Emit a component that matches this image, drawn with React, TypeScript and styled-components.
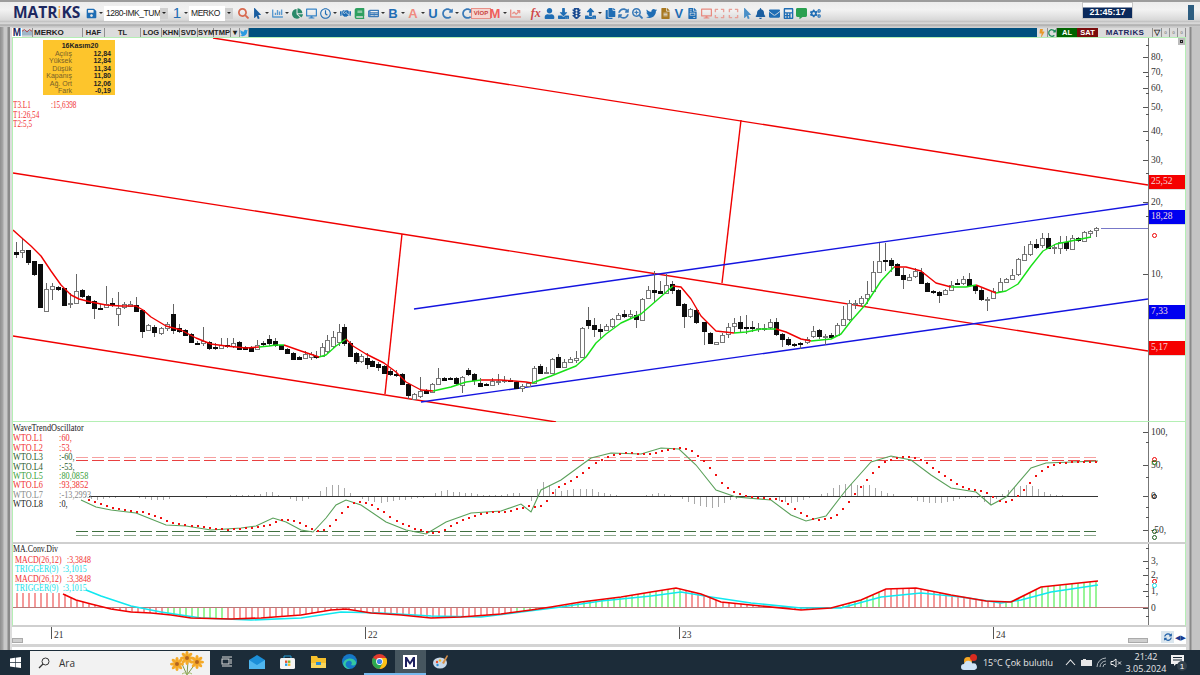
import React from 'react';
import styled, { createGlobalStyle } from 'styled-components';
import {
  FaSave, FaSearch, FaMousePointer, FaChartBar, FaChartPie, FaDesktop, FaRegClock, FaHandshake,
  FaNewspaper, FaUser, FaDownload, FaTrafficLight, FaUpload, FaCopy, FaSyncAlt, FaSearchPlus,
  FaTwitter, FaFileAlt, FaExpand, FaBell, FaEnvelope, FaCalculator, FaCommentAlt, FaCogs, FaBolt,
  FaRedoAlt, FaChartLine, FaBook, FaFileInvoice,
} from 'react-icons/fa';

const GlobalStyle = createGlobalStyle`
  html, body { margin: 0; padding: 0; background: #b4b4b4; }
  #root { width: 1200px; height: 675px; overflow: hidden; }
`;

/* ---- chart data, all in page pixels ---- */
type Candle = [number, number, number, number, number];
type Pt = [number, number];

const seg1: Candle[] = [
  [251,253,241,257,1],[249,251,237,257,0],[249,261,249,264,1],[260,273,260,275,1],[263,306,263,307,1],
  [288,310,282,310,0],[285,288,282,299,0],[286,288,285,290,1],[287,304,287,305,1],[302,303,292,307,0],
  [290,302,273,302,0],[289,295,288,297,1],[295,302,294,303,1],[300,307,299,318,1],[307,308,303,309,1],
  [303,306,285,307,0],[302,304,297,306,1],[307,313,291,325,0],[303,306,301,308,0],[303,305,300,306,0],
  [304,310,296,310,1],[309,330,309,337,1],[324,329,323,330,0],[326,331,324,336,1],[327,332,326,334,0],
  [323,327,321,330,0],[313,329,303,333,1],[327,330,323,332,1],[329,334,328,335,1],[333,341,332,342,1],
  [342,343,340,344,1],[340,342,326,345,0],[341,347,340,349,1],[346,347,342,349,1],[344,347,337,348,0],
  [344,345,337,347,1],[342,345,337,347,0],[341,348,340,349,1],[346,348,345,349,1],[347,350,345,351,1],
  [344,348,339,349,0],[342,343,340,346,1],[338,342,334,345,1],[340,344,337,346,1],[344,348,344,349,1],
  [348,352,347,353,1],[352,358,351,359,1],[356,358,355,359,1],
];
const seg2: Candle[] = [
  [353,357,350,358,0],[353,356,351,359,0],[355,356,350,358,1],[346,355,342,356,0],[339,350,334,352,0],
  [336,345,330,347,0],[331,341,323,345,0],[326,342,323,345,1],[342,355,340,356,1],[352,360,351,363,1],
  [355,360,353,362,0],[357,363,352,368,1],[360,365,359,366,1],[363,366,361,370,1],
];
const seg3: Candle[] = [
  [365,372,364,373,1],[370,373,368,375,1],[373,374,369,376,1],[373,383,372,384,1],[383,394,382,398,1],
  [393,398,392,399,0],[390,395,376,397,0],[389,392,388,393,1],[383,391,382,392,0],[377,383,367,384,0],
  [377,379,376,380,1],[377,378,376,379,1],[377,382,376,384,1],[376,384,375,392,0],[369,373,367,375,1],
  [373,379,372,384,1],[382,385,377,385,1],[383,384,382,385,1],[380,384,377,385,0],[380,381,373,384,0],
  [379,380,375,382,0],[379,380,377,381,1],[381,387,380,388,1],[385,387,383,391,0],[382,385,381,386,0],
  [367,382,365,383,0],[365,372,363,373,1],[371,372,366,373,0],[358,372,357,372,0],[356,366,353,367,1],
  [361,366,358,367,0],[358,361,356,362,0],[357,359,350,362,0],[327,356,326,357,0],[319,324,306,328,1],
  [324,328,317,336,1],[328,330,323,337,1],[325,329,323,330,0],[318,325,317,327,0],[314,318,312,319,0],
  [313,315,309,317,1],[313,315,309,317,0],[314,318,310,327,1],[298,319,297,320,0],[289,297,285,298,0],
  [289,291,270,302,1],[290,292,280,293,1],[284,292,273,293,0],[283,289,280,293,1],[289,304,288,305,1],
  [303,315,302,327,1],[308,315,307,317,0],[309,321,308,323,1],
];
const seg4: Candle[] = [
  [321,330,321,344,1],[332,342,331,343,1],[341,343,341,344,0],[334,341,332,342,0],[326,333,322,337,0],
  [322,325,317,332,0],[321,327,315,332,1],[326,327,314,333,1],[326,327,320,331,1],[327,328,322,331,0],
  [327,328,323,330,0],[321,326,318,328,0],[321,333,317,335,1],[333,338,332,346,1],[338,343,336,345,1],
  [343,344,342,346,1],[342,343,341,348,1],[338,341,336,343,0],[330,335,325,337,0],[329,335,328,338,1],
  [335,336,333,344,0],[334,336,332,337,1],[324,334,322,335,0],[318,324,305,325,0],[302,318,299,320,0],
  [302,303,299,308,0],[297,302,295,305,0],[293,297,280,303,0],[271,290,260,292,0],[260,271,242,272,0],
  [259,260,242,270,1],[259,264,257,271,1],[263,274,262,275,1],[274,278,267,288,1],[276,279,273,280,0],
  [270,275,267,277,0],[271,282,267,283,1],[282,290,281,291,1],[290,291,289,293,1],[291,294,290,302,1],
  [289,293,288,293,0],[284,289,280,290,0],[282,283,278,284,1],[278,282,275,284,0],[278,284,272,285,1],
  [285,289,284,293,1],[289,298,287,300,1],[298,299,296,310,0],[290,297,287,297,0],[281,290,277,290,0],
  [278,281,277,282,0],[274,278,268,279,0],[258,273,257,275,0],[253,259,245,260,0],[243,253,240,255,0],
  [243,246,238,248,1],[237,244,232,247,0],[237,247,232,248,1],[246,247,243,253,0],[241,247,235,253,0],
  [241,247,235,250,1],[237,248,234,249,0],[237,239,236,241,1],[231,240,230,241,0],[230,232,229,237,0],
  [227,229,226,236,0],
];

const spread = (rows: Candle[], x0: number, x1: number) =>
  rows.map((c, i) => ({ x: Math.round(x0 + ((x1 - x0) * i) / (rows.length - 1)), c }));

const candles = [
  ...spread(seg1, 15, 298),
  ...spread(seg2, 304, 377),
  ...spread(seg3, 383, 695),
  ...spread(seg4, 703, 1095),
];

const maRuns: { color: string; pts: Pt[] }[] = [
  { color: '#f00000', pts: [[12,229],[22,238],[30,245],[40,255],[50,270],[60,284],[70,294],[78,298],[90,301],[105,304],[120,305],[135,305],[142,309],[150,316],[165,325],[180,329],[195,337],[210,343],[225,345],[245,347],[258,346]] },
  { color: '#18e018', pts: [[258,346],[268,345],[275,344],[283,344]] },
  { color: '#f00000', pts: [[283,344],[300,350],[318,356]] },
  { color: '#18e018', pts: [[318,356],[325,354],[335,345],[345,338]] },
  { color: '#f00000', pts: [[345,338],[352,345],[365,353],[383,362],[395,371],[405,381],[420,389],[432,390]] },
  { color: '#18e018', pts: [[432,390],[450,386],[465,381],[480,379]] },
  { color: '#f00000', pts: [[480,379],[500,379],[525,381],[531,382]] },
  { color: '#18e018', pts: [[531,382],[550,375],[575,365],[585,356],[595,342],[605,333],[620,322],[640,313],[655,300],[672,285]] },
  { color: '#f00000', pts: [[672,285],[680,286],[690,298],[700,315],[715,330],[733,332]] },
  { color: '#18e018', pts: [[733,332],[745,331],[760,328],[775,328]] },
  { color: '#f00000', pts: [[775,328],[785,331],[800,338],[810,340]] },
  { color: '#18e018', pts: [[810,340],[830,338],[840,333],[850,320],[865,303],[880,280],[893,266]] },
  { color: '#f00000', pts: [[893,266],[905,266],[920,270],[935,282],[950,286]] },
  { color: '#18e018', pts: [[950,286],[965,286],[975,284]] },
  { color: '#f00000', pts: [[975,284],[985,288],[995,292]] },
  { color: '#18e018', pts: [[995,292],[1005,290],[1017,283],[1030,265],[1042,250],[1055,243],[1075,239],[1090,236]] },
];

const trendLines: { color: string; d: number[] }[] = [
  { color: '#f00000', d: [212,37,1147,184] },
  { color: '#f00000', d: [12,172,1147,350] },
  { color: '#f00000', d: [12,335,555,421] },
  { color: '#f00000', d: [401,233,384,393] },
  { color: '#f00000', d: [740,119,721,282] },
  { color: '#1414e0', d: [413,308,1147,203] },
  { color: '#1414e0', d: [420,401,1147,298] },
];

const wtoLine: Pt[] = [[80,500],[95,507],[110,510],[135,513],[150,519],[165,525],[185,526],[210,530],[240,528],[255,526],[272,518],[285,522],[300,530],[312,532],[325,518],[335,505],[345,500],[360,505],[385,522],[405,530],[425,534],[445,522],[470,513],[500,511],[520,504],[530,512],[540,490],[560,480],[590,458],[610,453],[640,454],[660,448],[678,449],[695,465],[715,490],[735,497],[770,500],[790,515],[805,521],[825,516],[845,490],[870,462],[890,456],[910,460],[930,475],[950,488],[975,492],[990,505],[1005,497],[1030,468],[1045,463],[1097,461]];
const macdLine: Pt[] = [[62,594],[75,600],[90,604],[110,609],[130,612],[150,613],[170,615],[190,618],[230,619],[260,618],[300,615],[330,610],[345,609],[370,613],[400,615],[430,618],[460,617],[500,614],[530,610],[550,607],[580,602],[620,597],[650,592],[675,588],[700,594],[720,602],[760,606],[800,610],[830,608],[860,600],[885,589],[915,588],[950,595],[985,601],[1010,602],[1040,587],[1097,581]];
const triggerLine: Pt[] = [[85,590],[100,596],[130,606],[160,612],[200,618],[250,620],[300,618],[340,612],[380,613],[430,616],[480,617],[520,612],[560,607],[600,601],[650,596],[680,592],[710,597],[750,603],[800,608],[840,608],[880,597],[920,593],[960,597],[1000,603],[1020,600],[1050,592],[1097,585]];
const greenBars: Pt[] = [[165,225],[510,680],[815,880],[1000,1098]];

const valueAt = (pts: Pt[], x: number) => {
  if (x <= pts[0][0]) return pts[0][1];
  for (let i = 1; i < pts.length; i++) {
    if (x <= pts[i][0]) {
      const [x0, y0] = pts[i - 1];
      const [x1, y1] = pts[i];
      return y0 + ((y1 - y0) * (x - x0)) / (x1 - x0);
    }
  }
  return pts[pts.length - 1][1];
};

const lagged = (x: number) => (valueAt(wtoLine, x - 6) + valueAt(wtoLine, x - 12) + valueAt(wtoLine, x - 18)) / 3;
const steps = (from: number, to: number) => {
  const out: number[] = [];
  for (let x = from; x <= to; x += 6.03) out.push(Math.round(x));
  return out;
};
const toPoints = (pts: Pt[]) => pts.map((p) => p.join(',')).join(' ');

/* ---- page frame ---- */
const Page = styled.div`
  width: 1200px;
  height: 675px;
  display: flex;
  flex-direction: column;
  font-family: 'Liberation Sans', Arial, sans-serif;
`;

const TopBar = styled.header`
  height: 27px;
  flex: none;
  box-sizing: border-box;
  border-top: 2px solid #9c9c9c;
  background: linear-gradient(#ececec 0, #f2f2f2 8px, #d8d8d8 18px, #bdbdbd 20px, #e6e6e6 21px, #aaa 23px, #d0d0d0 25px);
  display: flex;
  align-items: flex-start;
  padding: 1px 0 0 13px;
  position: relative;
`;

const Logo = styled.div`
  width: 68px;
  flex: none;
  font: 700 15.5px/19px 'Open Sans', sans-serif;
  color: #1d2860;
  white-space: nowrap;
`;

const LogoDot = styled.span`
  color: #e8902a;
  font-weight: 400;
`;

const Tools = styled.div`
  display: flex;
  align-items: center;
  height: 20px;
  margin-left: 3px;
`;

const ToolIcon = styled.span<{ $c?: string }>`
  width: 14px;
  height: 20px;
  flex: none;
  display: flex;
  align-items: center;
  justify-content: center;
  color: ${(p) => p.$c || '#1f6db4'};
  font-size: 11px;
`;

const TailIcons = styled.div`
  display: flex;
  align-items: center;
  margin-left: 7px;
  & > span:not(.caret) {
    width: 13.7px;
  }
`;

const ToolLetter = styled(ToolIcon)<{ $italic?: boolean }>`
  font: ${(p) => (p.$italic ? 'italic 700 12px' : '700 13px')} 'Liberation Sans', sans-serif;
  font-family: ${(p) => (p.$italic ? "'Liberation Serif', serif" : "'Liberation Sans', sans-serif")};
`;

const WideTag = styled.span`
  width: 20px;
  flex: none;
  font: 700 6px/9px 'Liberation Sans', sans-serif;
  color: #c8443c;
  background: #f6d6d2;
  border: 1px solid #e89088;
  box-sizing: border-box;
  text-align: center;
`;

const Caret = styled.span`
  width: 6px;
  height: 20px;
  flex: none;
  display: flex;
  align-items: center;
  justify-content: center;
  &::before {
    content: '';
    border-left: 2px solid transparent;
    border-right: 2px solid transparent;
    border-top: 2px solid #333;
  }
`;

const Field = styled.span<{ $w: number }>`
  width: ${(p) => p.$w}px;
  height: 15px;
  flex: none;
  background: #fff;
  font: 400 8.5px/15px 'Liberation Sans', sans-serif;
  letter-spacing: -0.45px;
  color: #222;
  padding-left: 2px;
  box-sizing: border-box;
  white-space: nowrap;
`;

const ComboArrow = styled.span`
  width: 8px;
  height: 11px;
  flex: none;
  background: #d0d0d0;
  margin-right: 3px;
  display: flex;
  align-items: center;
  justify-content: center;
  &::before {
    content: '';
    border-left: 2px solid transparent;
    border-right: 2px solid transparent;
    border-top: 2px solid #222;
  }
`;

const Number1 = styled.span`
  width: 12px;
  flex: none;
  text-align: center;
  font: 400 15px/20px 'Liberation Sans', sans-serif;
  color: #1f6db4;
`;

const ClockBox = styled.div`
  position: absolute;
  left: 1083px;
  top: 1px;
  width: 49px;
  height: 15px;
  background: linear-gradient(#fff 0, #fff 4px, #0c2a5c 5px, #0a2a5c 15px);
  outline: 1px solid #c6c6c6;
  color: #fff;
  font: 700 9px/9px 'Liberation Sans', sans-serif;
  text-align: center;
  padding-top: 5px;
  box-sizing: border-box;
`;

const Grip = styled.div`
  position: absolute;
  left: 1188px;
  top: 3px;
  width: 6px;
  height: 15px;
  background: #2d5d80;
`;

const Middle = styled.div`
  flex: 1;
  display: flex;
  min-height: 0;
`;

const Gutter = styled.div`
  width: 10px;
  flex: none;
  box-sizing: border-box;
  background: linear-gradient(90deg, #8e8e8e 0, #a8a8a8 3px, #c8c8c8 4px, #c8c8c8 7px, #8a8a8a 8px);
`;

const RightGutter = styled.div`
  width: 14px;
  flex: none;
  background: linear-gradient(90deg, #d8d8d8 0, #d8d8d8 3px, #8a8a8a 4px, #8a8a8a 5px, #c4c4c4 6px);
`;

const Win = styled.main`
  flex: 1;
  min-width: 0;
  display: flex;
  flex-direction: column;
  background: #fff;
  border-left: 2px solid #ddd;
`;

/* ---- window strip with tabs ---- */
const Strip = styled.div`
  height: 10px;
  flex: none;
  display: flex;
  align-items: stretch;
  background: #00507f;
  border-top: 1px solid #cfcfcf;
  box-sizing: border-box;
`;

const Tab = styled.span<{ $w: number }>`
  width: ${(p) => p.$w}px;
  flex: none;
  box-sizing: border-box;
  background: #dcdcdc;
  border-right: 1px solid #909090;
  color: #222;
  font: 700 7.5px/9px 'Liberation Sans', sans-serif;
  text-align: center;
  white-space: nowrap;
`;

const NameTab = styled(Tab)`
  text-align: left;
  padding-left: 1px;
  font-size: 8px;
`;

const MTab = styled(Tab)`
  background: #fff;
  border: 0;
  color: #1d2860;
  font-size: 10px;
`;

const IconTab = styled(Tab)<{ $c: string }>`
  display: flex;
  align-items: center;
  justify-content: center;
  color: ${(p) => p.$c};
  font-size: 8px;
`;

const StripFill = styled.span`
  flex: 1;
`;

const TradeTab = styled(Tab)<{ $bg: string }>`
  background: ${(p) => p.$bg};
  color: #fff;
  border: 0;
`;

const BrandTab = styled(Tab)`
  color: #1d2860;
  font-size: 8px;
  letter-spacing: 0.4px;
`;

/* ---- chart panes ---- */
const Pane = styled.section<{ $h: number }>`
  height: ${(p) => p.$h}px;
  flex: none;
  display: flex;
  box-sizing: border-box;
  border: 1px solid #b4efb4;
  position: relative;
`;

const PlainPane = styled(Pane)`
  border-width: 0 1px 0 1px;
  border-color: #b4efb4;
  border-bottom: 2px solid #cfcfcf;
`;

const Plot = styled.div`
  width: 1135px;
  flex: none;
  position: relative;
  border-right: 1px solid #777;
  box-sizing: content-box;
`;

const Drawing = styled.svg`
  display: block;
  position: absolute;
  inset: 0;
  overflow: hidden;
`;

const Scale = styled.div`
  flex: 1;
  position: relative;
`;

const Mark = styled.span<{ $top: number }>`
  position: absolute;
  left: 2px;
  top: ${(p) => p.$top}px;
  font: 400 9.5px/10px 'Liberation Serif', serif;
  color: #333;
  &::before {
    content: '';
    position: absolute;
    left: -8px;
    top: 5px;
    width: 5px;
    height: 1px;
    background: #555;
  }
`;

const Minor = styled.i<{ $top: number }>`
  position: absolute;
  left: -3px;
  top: ${(p) => p.$top}px;
  width: 3px;
  height: 1px;
  background: #555;
`;

const PriceTag = styled.span<{ $top: number; $bg: string }>`
  position: absolute;
  left: 0;
  right: 0;
  top: ${(p) => p.$top}px;
  height: 14px;
  background: ${(p) => p.$bg};
  color: #f4dcdc;
  font: 400 9.5px/13px 'Liberation Serif', serif;
  padding-left: 2px;
  border-bottom: 1px solid #ddd;
`;

const ScaleDot = styled.i<{ $top: number; $c: string }>`
  position: absolute;
  left: 3px;
  top: ${(p) => p.$top}px;
  width: 3px;
  height: 3px;
  border-radius: 50%;
  border: 1px solid ${(p) => p.$c};
`;

const CornerBtn = styled.span`
  position: absolute;
  right: 0;
  top: 0;
  width: 7px;
  height: 7px;
  background: #bbb;
  &::before {
    content: '';
    position: absolute;
    inset: 2px;
    border: 1px solid #222;
  }
`;

const InfoCard = styled.div`
  position: absolute;
  left: 30px;
  top: 2px;
  width: 72px;
  height: 55px;
  box-sizing: border-box;
  background: #fdc52c;
  padding: 2px 4px 0 0;
  font: 700 7px/7.5px 'Liberation Sans', sans-serif;
  color: #222;
`;

const InfoTitle = styled.div`
  text-align: center;
  padding-left: 6px;
`;

const InfoRow = styled.div`
  display: grid;
  grid-template-columns: 29px 1fr;
  & > span:first-child {
    text-align: right;
    color: #77602a;
    font-weight: 400;
  }
  & > span:last-child {
    text-align: right;
  }
`;

const Legend = styled.div<{ $top: number; $step: number; $sx: number }>`
  position: absolute;
  left: 0;
  top: ${(p) => p.$top}px;
  font: 400 9.5px/${(p) => p.$step}px 'Liberation Serif', serif;
  white-space: nowrap;
  transform: scaleX(${(p) => p.$sx});
  transform-origin: left top;
`;

const LegendRow = styled.div<{ $c: string; $gap: number }>`
  color: ${(p) => p.$c};
  display: grid;
  grid-template-columns: ${(p) => p.$gap}px auto;
`;

const LegendTitle = styled.div`
  color: #222;
  margin-bottom: 1px;
`;

/* ---- time axis ---- */
const TimeAxis = styled.div`
  height: 20px;
  flex: none;
  display: flex;
  align-items: flex-start;
  position: relative;
  background: #fff;
  border-bottom: 3px solid #d4d4d4;
  box-sizing: border-box;
`;

const Year = styled.span<{ $w: number }>`
  width: ${(p) => p.$w}px;
  flex: none;
  height: 12px;
  box-sizing: border-box;
  font: 400 9.5px/17px 'Liberation Serif', serif;
  color: #333;
  padding-left: 2px;
  border-left: 1px solid #555;
`;

const AxisStart = styled.span`
  width: 39px;
  flex: none;
`;

const ScrollBit = styled.span`
  position: absolute;
  bottom: 1px;
  height: 5px;
  background: #cfcfcf;
  border: 1px solid #aaa;
  box-sizing: border-box;
`;

const ScrollLeft = styled(ScrollBit)`
  left: 0;
  width: 11px;
`;

const ScrollRight = styled(ScrollBit)`
  left: 1116px;
  width: 20px;
`;

const SyncBtn = styled.span`
  position: absolute;
  left: 1149px;
  bottom: 1px;
  width: 13px;
  height: 12px;
  background: #dbe6ee;
  color: #1f5fa8;
  font-size: 8px;
  display: flex;
  align-items: center;
  justify-content: center;
`;

const Arrows = styled.span`
  position: absolute;
  left: 1163px;
  bottom: 1px;
  width: 13px;
  height: 9px;
  color: #1a3a90;
  font: 400 7px/9px 'DejaVu Sans', sans-serif;
  white-space: nowrap;
`;

/* ---- windows taskbar ---- */
const Taskbar = styled.footer`
  height: 25px;
  flex: none;
  background: #1c2c39;
  display: flex;
  align-items: stretch;
  color: #e8e8e8;
  font: 400 10px/25px 'Open Sans', sans-serif;
`;

const StartBtn = styled.span`
  width: 30px;
  flex: none;
  display: flex;
  align-items: center;
  justify-content: center;
`;

const SearchBox = styled.div`
  width: 180px;
  flex: none;
  background: #f2f2f2;
  color: #333;
  display: flex;
  align-items: center;
  gap: 9px;
  padding: 0 4px 0 8px;
  box-sizing: border-box;
  margin-top: 1px;
`;

const SearchText = styled.span`
  flex: 1;
`;

const TaskIcons = styled.div`
  display: flex;
  margin-left: 2px;
`;

const TaskItem = styled.span<{ $w?: number; $on?: boolean; $line?: boolean }>`
  width: ${(p) => p.$w || 30.6}px;
  flex: none;
  display: flex;
  align-items: center;
  justify-content: center;
  box-sizing: border-box;
  background: ${(p) => (p.$on ? '#46565f' : 'transparent')};
  border-bottom: 2px solid ${(p) => (p.$line ? '#76b9ed' : 'transparent')};
`;

const Tray = styled.div`
  margin-left: auto;
  display: flex;
  align-items: center;
  height: 25px;
`;

const Weather = styled.span`
  display: flex;
  align-items: center;
  gap: 5px;
  margin-right: 9px;
  font-size: 9px;
`;

const TraySlot = styled.span<{ $w: number }>`
  width: ${(p) => p.$w}px;
  flex: none;
  display: flex;
  align-items: center;
  justify-content: center;
`;

const TrayClock = styled.span`
  width: 46px;
  flex: none;
  text-align: center;
  font: 400 9px/12px 'Open Sans', sans-serif;
`;

const Note = styled.span`
  width: 31px;
  flex: none;
  box-sizing: border-box;
  padding-right: 12px;
  display: flex;
  align-items: center;
  justify-content: center;
`;

/* ---- small drawings ---- */
const WinLogo = () => (
  <svg width="11" height="11" viewBox="0 0 11 11">
    <path d="M0 1.5 5 .8v4.3H0zM5.6.7 11 0v5.1H5.6zM0 5.8h5v4.4l-5-.7zM5.6 5.8H11V11l-5.4-.8z" fill="#fff" />
  </svg>
);

const Lens = () => (
  <svg width="12" height="12" viewBox="0 0 12 12">
    <circle cx="7.500" cy="4.500" r="3.500" fill="none" stroke="#333" />
    <path d="M5 7 1 11" stroke="#333" strokeWidth="1.200" />
  </svg>
);

const Flowers = () => (
  <svg width="38" height="24" viewBox="0 0 38 24">
    <path d="M19 24 14 13M19 24l1-14M19 24l8-11" stroke="#7f9a4a" strokeWidth="1" fill="none" />
    <path d="M14 23c3-2 4-1 5 1M24 23c-3-2-4-1-5 1" stroke="#a5bb6a" fill="none" />
    {[[9, 13], [19, 7], [29, 11]].map(([x, y]) => (
      <g key={x}>
        {[0, 45, 90, 135, 180, 225, 270, 315].map((a) => (
          <ellipse key={a} cx={x} cy={y - 4} rx="1.6" ry="3" fill="#f4a928" transform={`rotate(${a} ${x} ${y})`} />
        ))}
        <circle cx={x} cy={y} r="2" fill="#b5651d" />
      </g>
    ))}
  </svg>
);

const MailGlyph = () => (
  <svg width="16" height="14" viewBox="0 0 16 14">
    <path d="M0 5 8 0l8 5v9H0z" fill="#1c8fd8" />
    <path d="M0 5l8 5 8-5v9H0z" fill="#4fb6ee" />
  </svg>
);

const StoreGlyph = () => (
  <svg width="15" height="15" viewBox="0 0 15 15">
    <path d="M4 4V2h7v2" fill="none" stroke="#27a0dc" />
    <rect x="0" y="4" width="15" height="11" rx="1.5" fill="#f4f4f4" />
    <rect x="5" y="6.5" width="2.4" height="2.4" fill="#e8502a" />
    <rect x="8" y="6.5" width="2.4" height="2.4" fill="#7cb82e" />
    <rect x="5" y="9.5" width="2.4" height="2.4" fill="#22a2e4" />
    <rect x="8" y="9.5" width="2.4" height="2.4" fill="#f8b820" />
  </svg>
);

const FolderGlyph = () => (
  <svg width="15" height="13" viewBox="0 0 15 13">
    <path d="M0 1h6l1 2h8v10H0z" fill="#f6c02c" />
    <rect x="0" y="8" width="15" height="5" fill="#f9d65c" />
    <rect x="5" y="7" width="5" height="3" fill="#2a8fd8" />
  </svg>
);

const EdgeGlyph = () => (
  <svg width="15" height="15" viewBox="0 0 15 15">
    <circle cx="7.5" cy="7.5" r="7.5" fill="#1678c8" />
    <path d="M1 10c1-6 10-8 13-2 1 3-2 4-5 3 2-2 0-5-3-4-3 1-4 6 2 8-4 0-6-2-7-5z" fill="#35c8a0" />
  </svg>
);

const ChromeGlyph = () => (
  <svg width="15" height="15" viewBox="0 0 15 15">
    <circle cx="7.5" cy="7.5" r="7.5" fill="#e33b2e" />
    <path d="M7.5 7.5 1 3.8A7.5 7.5 0 0 0 7.5 15l3.5-6z" fill="#2da94f" />
    <path d="M7.5 4h6.7a7.5 7.5 0 0 1-6.7 11l3.2-6z" fill="#fbc116" />
    <circle cx="7.5" cy="7.5" r="3.4" fill="#fff" />
    <circle cx="7.5" cy="7.5" r="2.6" fill="#3f83ec" />
  </svg>
);

const MatriksGlyph = () => (
  <svg width="14" height="14" viewBox="0 0 14 14">
    <rect width="14" height="14" fill="#fff" />
    <path d="M2 12V2h2l3 5 3-5h2v10h-2V6L7 10 4 6v6z" fill="#1d2060" />
  </svg>
);

const PaintGlyph = () => (
  <svg width="15" height="14" viewBox="0 0 15 14">
    <ellipse cx="7" cy="8" rx="7" ry="5.5" fill="#c8d8e8" />
    <circle cx="4" cy="7" r="1.2" fill="#e8502a" />
    <circle cx="7" cy="5.5" r="1.2" fill="#f4b820" />
    <circle cx="4.5" cy="10" r="1.2" fill="#2a8fd8" />
    <path d="M9 8 14 0l1 1-4 8z" fill="#d89048" />
  </svg>
);

const NotifyGlyph = () => (
  <svg width="18" height="19" viewBox="0 0 18 19">
    <path d="M1 2h13v9H6l-2 2v-2H1z" fill="#f0f0f0" />
    <path d="M3 4.5h9M3 7h9" stroke="#1c2c39" />
    <circle cx="12" cy="13" r="5" fill="#33414c" />
    <text x="12" y="16" fontSize="8" fontFamily="Liberation Sans" textAnchor="middle" fill="#fff">1</text>
  </svg>
);

const WeatherGlyph = () => (
  <svg width="17" height="17" viewBox="0 0 17 17">
    <circle cx="7" cy="7" r="4" fill="#f6a723" />
    <path d="M3 16a3 3 0 0 1 0-6 4.5 4.5 0 0 1 8.5-.5A3.4 3.4 0 0 1 13.500 16z" fill="#cfe3f6" />
    <circle cx="12.500" cy="3.500" r="3.500" fill="#d92b20" />
  </svg>
);

const MiniChartIcon = () => (
  <svg width="12" height="9" viewBox="0 0 12 9">
    <path d="M0 8V2h12v6z" fill="#9fb6c8" />
    <path d="M0 3 3 1l3 3 3-3 3 2" fill="none" stroke="#b03030" />
  </svg>
);

const TrayIcons = () => (
  <>
    <TraySlot $w={16}>
      <svg width="11" height="7" viewBox="0 0 11 7"><path d="M1 6l4.500-5L10 6" fill="none" stroke="#eee" strokeWidth="1.100" /></svg>
    </TraySlot>
    <TraySlot $w={16}>
      <svg width="13" height="8" viewBox="0 0 13 8"><rect x="1" y="1" width="11" height="6" fill="#e8e8e8" /><rect x="3" y="0" width="3" height="2" fill="#e8e8e8" /></svg>
    </TraySlot>
    <TraySlot $w={15}>
      <svg width="12" height="11" viewBox="0 0 12 11"><path d="M1 10A9 9 0 0 1 10 1M4 10a6 6 0 0 1 6-6M7 10a3 3 0 0 1 3-3" fill="none" stroke="#aeb6bc" /></svg>
    </TraySlot>
    <TraySlot $w={14}>
      <svg width="12" height="10" viewBox="0 0 12 10"><path d="M1 3.500h2L6 1v8L3 6.500H1z" fill="none" stroke="#eee" /><path d="m8 3.500 3 3m0-3-3 3" stroke="#eee" /></svg>
    </TraySlot>
  </>
);

/* ---- chart layers ---- */
const MainChart = () => (
  <Drawing width="1135" height="384" viewBox="12 37 1135 384">
    <line x1="1100" y1="227.500" x2="1147" y2="227.500" stroke="#7777c8" />
    {trendLines.map((l) => (
      <line key={l.d.join()} x1={l.d[0]} y1={l.d[1]} x2={l.d[2]} y2={l.d[3]} stroke={l.color} strokeWidth="1.400" />
    ))}
    <g shapeRendering="crispEdges">
      {candles.map(({ x, c }) => (
        <g key={x}>
          <line x1={x + 0.5} x2={x + 0.5} y1={c[2]} y2={c[3]} stroke="#666" />
          <rect x={x - 2 + 0.5} y={c[0] + 0.5} width="4" height={Math.max(c[1] - c[0], 1)} fill={c[4] ? '#0c0c0c' : '#fff'} stroke={c[4] ? '#0c0c0c' : '#777'} />
        </g>
      ))}
    </g>
    {maRuns.map((r) => (
      <polyline key={r.pts[0].join()} points={toPoints(r.pts)} fill="none" stroke={r.color} strokeWidth="1.400" strokeLinejoin="round" />
    ))}
  </Drawing>
);

const WaveChart = () => (
  <Drawing width="1135" height="120" viewBox="12 422 1135 120">
    <g shapeRendering="crispEdges">
      {[[457.500, '#f6a0a0'], [460.500, '#e84040'], [531.500, '#3f6f3f'], [535.500, '#8aa58a']].map(([y, c]) => (
        <line key={y} x1="75" x2="1097" y1={y} y2={y} stroke={c as string} strokeDasharray="12 4" />
      ))}
      {steps(72, 1097).map((x) => {
        const h = (lagged(x) - valueAt(wtoLine, x)) * 0.8;
        return <line key={x} x1={x + 0.5} x2={x + 0.5} y1="496" y2={496 - h} stroke="#a8a8a8" />;
      })}
      <line x1="88" x2="1097" y1="496.500" y2="496.500" stroke="#333" />
    </g>
    <polyline points={toPoints(wtoLine)} fill="none" stroke="#5aa05a" strokeWidth="1.100" />
    {steps(88, 1097).map((x) => (
      <rect key={x} x={x - 1} y={Math.round(lagged(x)) - 1} width="2" height="2" fill="#f01010" shapeRendering="crispEdges" />
    ))}
  </Drawing>
);

const MacdChart = () => (
  <Drawing width="1135" height="81" viewBox="12 544 1135 81">
    <g shapeRendering="crispEdges">
      {steps(15, 1097).map((x) => {
        const green = greenBars.some(([a, b]) => x >= a && x <= b);
        const top = x < 62 ? 593 : valueAt(macdLine, x);
        return <line key={x} x1={x + 1} x2={x + 1} y1="607" y2={top} strokeWidth="2" stroke={green ? '#98f598' : '#f59a9a'} />;
      })}
      <line x1="12" x2="1147" y1="607.500" y2="607.500" stroke="#b87878" />
    </g>
    <polyline points={toPoints(triggerLine)} fill="none" stroke="#10e8f0" strokeWidth="1.600" />
    <polyline points={toPoints(macdLine)} fill="none" stroke="#f00000" strokeWidth="1.600" />
  </Drawing>
);

const infoRows = [
  ['Açılış', '12,84'], ['Yüksek', '12,84'], ['Düşük', '11,34'],
  ['Kapanış', '11,80'], ['Ağ. Ort', '12,06'], ['Fark', '-0,19'],
];
const waveRows = [
  ['WTO.L1', ':60,', '#f03030'], ['WTO.L2', ':53,', '#f03030'], ['WTO.L3', ':-60,', '#2c5c2c'],
  ['WTO.L4', ':-53,', '#2c5c2c'], ['WTO.L5', ':80,0858', '#3aa03a'], ['WTO.L6', ':93,3852', '#f03030'],
  ['WTO.L7', ':-13,2993', '#888'], ['WTO.L8', ':0,', '#222'],
];
const macdRows: [string, string, string, number][] = [
  ['MACD(26,12)', ':3,3848', '#f03030', 65], ['TRIGGER(9)', ':3,1015', '#20e0e8', 60],
  ['MACD(26,12)', ':3,3848', '#f03030', 65], ['TRIGGER(9)', ':3,1015', '#20e0e8', 60],
];

export default function App() {
  return (
    <Page>
      <GlobalStyle />
      <TopBar>
        <Logo>MATR<LogoDot>i</LogoDot>KS</Logo>
        <Tools>
          <ToolIcon><FaSave /></ToolIcon><Caret />
          <Field $w={56}>1280-IMK_TUM</Field><ComboArrow />
          <Number1>1</Number1><Caret />
          <Field $w={36}>MERKO</Field><ComboArrow />
          <ToolIcon $c="#d86a50"><FaSearch /></ToolIcon>
          <ToolIcon $c="#1a5ea0"><FaMousePointer /></ToolIcon><Caret />
          <ToolIcon $c="#5a9ad0"><FaChartBar /></ToolIcon><Caret />
          <ToolIcon $c="#2a8a6a"><FaChartPie /></ToolIcon>
          <ToolIcon $c="#3a86c8"><FaDesktop /></ToolIcon>
          <ToolIcon><FaRegClock /></ToolIcon><Caret />
          <ToolIcon><FaHandshake /></ToolIcon>
          <ToolIcon $c="#2fa060"><FaBook /></ToolIcon>
          <ToolIcon $c="#3a7ab8"><FaNewspaper /></ToolIcon><Caret />
          <ToolLetter>B</ToolLetter><Caret />
          <ToolLetter $c="#f08a80">A</ToolLetter><Caret />
          <ToolLetter>U</ToolLetter>
          <ToolIcon $c="#3a7ab8"><FaRedoAlt /></ToolIcon><Caret />
          <ToolIcon $c="#3a7ab8"><FaRedoAlt /></ToolIcon>
          <ToolIcon $c="#000"><WideTag>VİOP</WideTag></ToolIcon>
          <ToolLetter $c="#f0605a">M</ToolLetter><Caret />
          <ToolIcon $c="#e89088"><FaChartLine /></ToolIcon>
          <TailIcons>
            <ToolLetter $italic $c="#d04848">fx</ToolLetter>
            <ToolIcon><FaUser /></ToolIcon>
            <ToolIcon><FaDownload /></ToolIcon>
            <ToolIcon $c="#1a4a90"><FaTrafficLight /></ToolIcon>
            <ToolIcon><FaUpload /></ToolIcon><Caret className="caret" />
            <ToolIcon><FaCopy /></ToolIcon>
            <ToolIcon $c="#3a7ab8"><FaSyncAlt /></ToolIcon>
            <ToolIcon $c="#3a7ab8"><FaSearchPlus /></ToolIcon>
            <ToolIcon><FaTwitter /></ToolIcon>
            <ToolIcon $c="#a87820"><FaFileAlt /></ToolIcon>
            <ToolLetter>V</ToolLetter>
            <ToolIcon><FaFileInvoice /></ToolIcon>
            <ToolIcon $c="#e88a80"><FaDesktop /></ToolIcon>
            <ToolIcon $c="#e8a098"><FaExpand /></ToolIcon>
            <ToolIcon $c="#e8a098"><FaExpand /></ToolIcon>
            <ToolIcon $c="#4a90c8"><FaMousePointer /></ToolIcon>
            <ToolIcon $c="#1a5ea0"><FaBell /></ToolIcon>
            <ToolIcon><FaEnvelope /></ToolIcon>
            <ToolIcon><FaCalculator /></ToolIcon>
            <ToolIcon $c="#2aa050"><FaCommentAlt /></ToolIcon>
            <ToolIcon><FaCogs /></ToolIcon>
          </TailIcons>
        </Tools>
        <ClockBox>21:45:17</ClockBox>
        <Grip />
      </TopBar>

      <Middle>
        <Gutter />
        <Win>
          <Strip>
            <MTab $w={10}>M</MTab>
            <IconTab $w={11} $c="#b03030"><MiniChartIcon /></IconTab>
            <NameTab $w={50}>MERKO</NameTab>
            <Tab $w={22}>HAF</Tab>
            <Tab $w={36}>TL</Tab>
            <Tab $w={21}>LOG</Tab>
            <Tab $w={18}>KHN</Tab>
            <Tab $w={18}>SVD</Tab>
            <Tab $w={16}>SYM</Tab>
            <Tab $w={17}>TMP</Tab>
            <Tab $w={9}>▾</Tab>
            <IconTab $w={9} $c="#2a9ae0"><FaTwitter /></IconTab>
            <StripFill />
            <IconTab $w={11} $c="#e8982a"><FaBolt /></IconTab>
            <IconTab $w={9} $c="#1a8a5a"><FaRedoAlt /></IconTab>
            <TradeTab $w={20} $bg="#006400">AL</TradeTab>
            <TradeTab $w={21} $bg="#7a0c0c">SAT</TradeTab>
            <BrandTab $w={55}>MATRiKS</BrandTab>
            <Tab $w={9}>▽</Tab>
            <Tab $w={8}>▫</Tab>
            <Tab $w={8}>▫</Tab>
            <Tab $w={8}>▫</Tab>
          </Strip>

          <Pane $h={385}>
            <Plot>
              <MainChart />
              <InfoCard>
                <InfoTitle>16Kasım20</InfoTitle>
                {infoRows.map(([k, v]) => (
                  <InfoRow key={k}><span>{k}</span><span>{v}</span></InfoRow>
                ))}
              </InfoCard>
              <Legend $top={63} $step={9.500} $sx={0.76}>
                <LegendRow $c="#f03030" $gap={50}><span>T3.L1</span><span>:15,6398</span></LegendRow>
                <LegendRow $c="#f03030" $gap={50}><span>T1:26,54</span><span /></LegendRow>
                <LegendRow $c="#f03030" $gap={50}><span>T2:5,5</span><span /></LegendRow>
              </Legend>
            </Plot>
            <Scale>
              <CornerBtn />
              {[[80, 14], [70, 29], [60, 45], [50, 64], [40, 88], [30, 117], [20, 159], [10, 231]].map(([v, t]) => (
                <Mark key={v} $top={t}>{v},</Mark>
              ))}
              {[7, 38, 55, 76, 102, 135, 178].map((t) => <Minor key={t} $top={t} />)}
              <PriceTag $top={137} $bg="#f50000">25,52</PriceTag>
              <PriceTag $top={172} $bg="#0000f0">18,28</PriceTag>
              <ScaleDot $top={195} $c="#f00000" />
              <PriceTag $top={267} $bg="#0000f0">7,33</PriceTag>
              <PriceTag $top={303} $bg="#f50000">5,17</PriceTag>
            </Scale>
          </Pane>

          <PlainPane $h={122}>
            <Plot>
              <WaveChart />
              <Legend $top={2} $step={9.400} $sx={0.87}>
                <LegendTitle>WaveTrendOscillator</LegendTitle>
                {waveRows.map(([k, v, c]) => (
                  <LegendRow key={k} $c={c} $gap={53}><span>{k}</span><span>{v}</span></LegendRow>
                ))}
              </Legend>
            </Plot>
            <Scale>
              {[['100,', 5], ['50,', 38], ['0', 69], ['-50,', 103]].map(([v, t]) => (
                <Mark key={v} $top={t as number}>{v}</Mark>
              ))}
              {[20, 55, 85, 95].map((t) => <Minor key={t} $top={t} />)}
              <ScaleDot $top={35} $c="#f00000" />
              <ScaleDot $top={38} $c="#1a7a1a" />
              <ScaleDot $top={72} $c="#111" />
              <ScaleDot $top={107} $c="#1a5a1a" />
              <ScaleDot $top={113} $c="#1a5a1a" />
            </Scale>
          </PlainPane>

          <PlainPane $h={83}>
            <Plot>
              <MacdChart />
              <Legend $top={1} $step={9.500} $sx={0.83}>
                <LegendTitle>MA.Conv.Div</LegendTitle>
                {macdRows.map(([k, v, c, gap], i) => (
                  <LegendRow key={i} $c={c} $gap={gap}><span>&nbsp;{k}</span><span>{v}</span></LegendRow>
                ))}
              </Legend>
            </Plot>
            <Scale>
              {[['3,', 12], ['2,', 26], ['1,', 42], ['0', 59]].map(([v, t]) => (
                <Mark key={v} $top={t as number}>{v}</Mark>
              ))}
              {[4, 24, 40, 52, 72].map((t) => <Minor key={t} $top={t} />)}
              <ScaleDot $top={35} $c="#f00000" />
              <ScaleDot $top={39} $c="#10e8f0" />
            </Scale>
          </PlainPane>

          <TimeAxis>
            <AxisStart />
            <Year $w={314}>21</Year>
            <Year $w={314}>22</Year>
            <Year $w={314}>23</Year>
            <Year $w={60}>24</Year>
            <ScrollLeft />
            <ScrollRight />
            <SyncBtn><FaSyncAlt /></SyncBtn>
            <Arrows>◀▶</Arrows>
          </TimeAxis>
        </Win>
        <RightGutter />
      </Middle>

      <Taskbar>
        <StartBtn><WinLogo /></StartBtn>
        <SearchBox>
          <Lens />
          <SearchText>Ara</SearchText>
          <Flowers />
        </SearchBox>
        <TaskIcons>
          <TaskItem $w={30}>
            <svg width="12" height="11" viewBox="0 0 12 11"><path d="M1 1h10M1 10h10" stroke="#ddd" /><rect x="1" y="3" width="7" height="5" fill="none" stroke="#ddd" /><path d="M10 3v5" stroke="#ddd" /></svg>
          </TaskItem>
          <TaskItem><MailGlyph /></TaskItem>
          <TaskItem><StoreGlyph /></TaskItem>
          <TaskItem><FolderGlyph /></TaskItem>
          <TaskItem><EdgeGlyph /></TaskItem>
          <TaskItem $line><ChromeGlyph /></TaskItem>
          <TaskItem $on $line><MatriksGlyph /></TaskItem>
          <TaskItem><PaintGlyph /></TaskItem>
        </TaskIcons>
        <Tray>
          <Weather>
            <WeatherGlyph />
            <span>15°C Çok bulutlu</span>
          </Weather>
          <TrayIcons />
          <TrayClock>21:42<br />3.05.2024</TrayClock>
          <Note><NotifyGlyph /></Note>
        </Tray>
      </Taskbar>
    </Page>
  );
}
